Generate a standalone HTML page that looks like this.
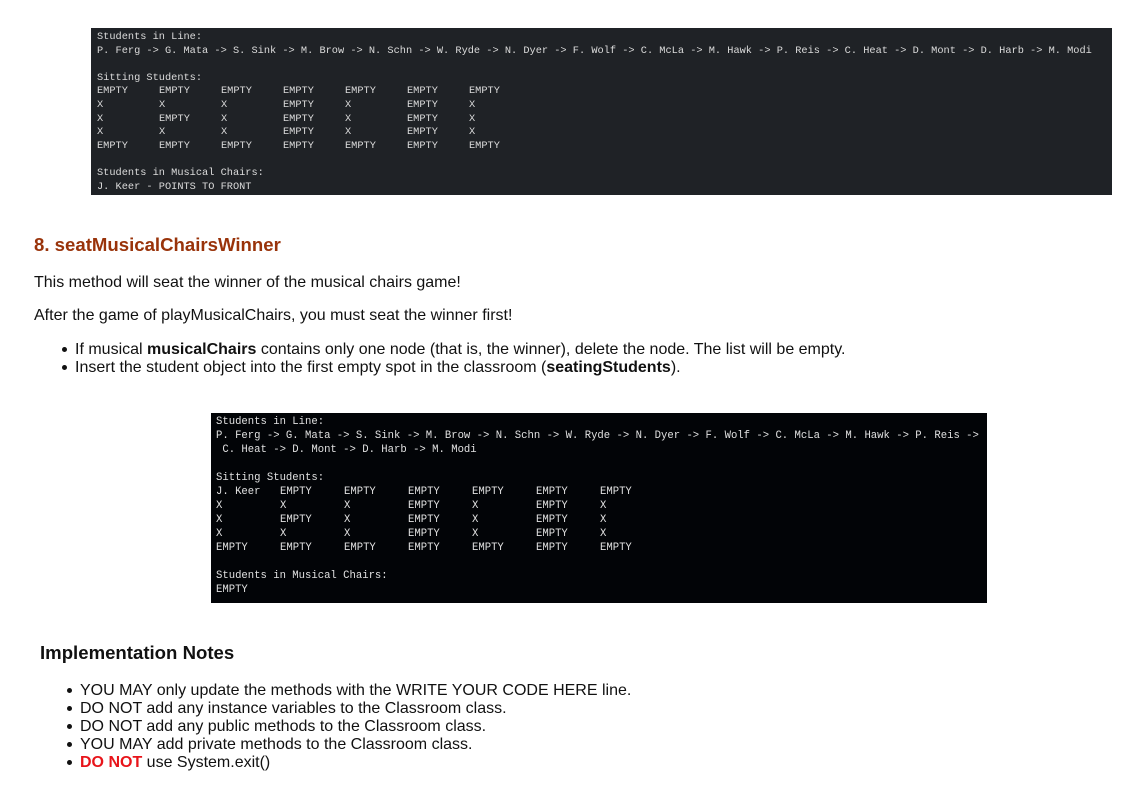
<!DOCTYPE html>
<html><head><meta charset="utf-8"><style>
body{margin:0;width:1126px;height:802px;background:#fff;position:relative;overflow:hidden;font-family:"Liberation Sans",Arial,sans-serif;color:#111}
.t{position:absolute;font-family:"Liberation Mono",monospace;white-space:pre}
.t1{left:91px;top:28px;width:1021px;height:167px;background:#1f2226;color:#dcdcdc;font-size:10.3px;line-height:13.6px;padding:3px 0 0 6px;box-sizing:border-box}
.t2{left:211px;top:413px;width:776px;height:190px;background:#020407;color:#e0e0e0;font-size:10.6px;line-height:14px;padding:2px 0 0 5px;box-sizing:border-box}
.t1 span{display:inline-block;width:62px}
.t2 span{display:inline-block;width:64px}
.a{position:absolute;white-space:nowrap}
h2{position:absolute;margin:0;left:34px;top:234px;font-size:18.6px;color:#99330a;font-weight:bold}
.p{font-size:16px}
ul{position:absolute;margin:0;padding:0 0 0 0;list-style:none}
li{position:relative;font-size:16px;line-height:18px;white-space:nowrap}
li:before{content:"";position:absolute;left:-13px;top:6px;width:5px;height:5px;border-radius:50%;background:#111}
</style></head><body>
<div class="t t1">Students in Line:
P. Ferg -&gt; G. Mata -&gt; S. Sink -&gt; M. Brow -&gt; N. Schn -&gt; W. Ryde -&gt; N. Dyer -&gt; F. Wolf -&gt; C. McLa -&gt; M. Hawk -&gt; P. Reis -&gt; C. Heat -&gt; D. Mont -&gt; D. Harb -&gt; M. Modi

Sitting Students:
<span>EMPTY</span><span>EMPTY</span><span>EMPTY</span><span>EMPTY</span><span>EMPTY</span><span>EMPTY</span><span>EMPTY</span>
<span>X</span><span>X</span><span>X</span><span>EMPTY</span><span>X</span><span>EMPTY</span><span>X</span>
<span>X</span><span>EMPTY</span><span>X</span><span>EMPTY</span><span>X</span><span>EMPTY</span><span>X</span>
<span>X</span><span>X</span><span>X</span><span>EMPTY</span><span>X</span><span>EMPTY</span><span>X</span>
<span>EMPTY</span><span>EMPTY</span><span>EMPTY</span><span>EMPTY</span><span>EMPTY</span><span>EMPTY</span><span>EMPTY</span>

Students in Musical Chairs:
J. Keer - POINTS TO FRONT</div>

<h2>8. seatMusicalChairsWinner</h2>
<div class="a p" style="left:34px;top:274px">This method will seat the winner of the musical chairs game!</div>
<div class="a p" style="left:34px;top:307px">After the game of playMusicalChairs, you must seat the winner first!</div>
<ul style="left:75px;top:341px">
<li>If musical <b>musicalChairs</b> contains only one node (that is, the winner), delete the node. The list will be empty.</li>
<li>Insert the student object into the first empty spot in the classroom (<b>seatingStudents</b>).</li>
</ul>

<div class="t t2">Students in Line:
P. Ferg -&gt; G. Mata -&gt; S. Sink -&gt; M. Brow -&gt; N. Schn -&gt; W. Ryde -&gt; N. Dyer -&gt; F. Wolf -&gt; C. McLa -&gt; M. Hawk -&gt; P. Reis -&gt;
 C. Heat -&gt; D. Mont -&gt; D. Harb -&gt; M. Modi

Sitting Students:
<span>J. Keer</span><span>EMPTY</span><span>EMPTY</span><span>EMPTY</span><span>EMPTY</span><span>EMPTY</span><span>EMPTY</span>
<span>X</span><span>X</span><span>X</span><span>EMPTY</span><span>X</span><span>EMPTY</span><span>X</span>
<span>X</span><span>EMPTY</span><span>X</span><span>EMPTY</span><span>X</span><span>EMPTY</span><span>X</span>
<span>X</span><span>X</span><span>X</span><span>EMPTY</span><span>X</span><span>EMPTY</span><span>X</span>
<span>EMPTY</span><span>EMPTY</span><span>EMPTY</span><span>EMPTY</span><span>EMPTY</span><span>EMPTY</span><span>EMPTY</span>

Students in Musical Chairs:
EMPTY</div>

<div class="a" style="left:40px;top:642px;font-size:18.6px;font-weight:bold;color:#111">Implementation Notes</div>
<ul style="left:80px;top:682px">
<li>YOU MAY only update the methods with the WRITE YOUR CODE HERE line.</li>
<li>DO NOT add any instance variables to the Classroom class.</li>
<li>DO NOT add any public methods to the Classroom class.</li>
<li>YOU MAY add private methods to the Classroom class.</li>
<li><b style="color:#e8141a">DO NOT</b> use System.exit()</li>
</ul>
</body></html>
